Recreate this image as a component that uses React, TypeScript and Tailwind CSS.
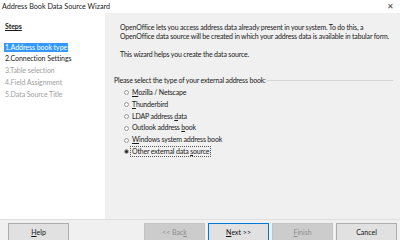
import React from "react";

const font = { fontFamily: 'Lato, "Noto Sans", sans-serif' };

function Radio({ checked, children, focus }: { checked?: boolean; children: React.ReactNode; focus?: boolean }) {
  return (
    <div className="flex items-center h-[11.8px] leading-[11.8px]">
      <span className="w-[5px] h-[5px] rounded-full border border-[#9a9a9a] bg-white flex items-center justify-center mr-[2px]">
        {checked && <span className="w-[3px] h-[3px] rounded-full bg-[#222]" />}
      </span>
      <span className={focus ? "outline outline-1 outline-dotted outline-[#555] px-[1px] leading-[9px]" : "px-[1px]"}>{children}</span>
    </div>
  );
}

function Btn({ children, variant }: { children: React.ReactNode; variant?: "default" | "primary" | "disabled" }) {
  const cls =
    variant === "primary"
      ? "border-[#0078d7] bg-[#e1e1e1] text-[#111]"
      : variant === "disabled"
      ? "border-[#c4c4c4] bg-[#cccccc] text-[#8c8c8c]"
      : "border-[#adadad] bg-[#e1e1e1] text-[#111]";
  return (
    <div className={`w-[61px] h-[20px] shrink-0 border flex items-start justify-center pt-[3px] leading-[10px] ${cls}`}>{children}</div>
  );
}

export default function App() {
  return (
    <div className="w-[400px] h-[240px] overflow-hidden bg-[#f0f0f0] flex flex-col text-[#1a1a1a] text-[7px] whitespace-nowrap" style={font}>
      <div className="h-[13px] shrink-0 bg-white flex items-center justify-between pl-[2px] pr-[6px] text-[7.2px] leading-[13px]">
        <span>Address Book Data Source Wizard</span>
        <span className="text-[8px] text-[#444]">✕</span>
      </div>
      <div className="flex h-[207px] shrink-0 border-b border-[#dfdfdf]">
        <div className="w-[105px] shrink-0 bg-white pl-[4px] pt-[8px] tracking-[-0.05px]">
          <div className="font-bold underline pl-[1px] h-[10px] leading-[10px]">Steps</div>
          <div className="mt-[10.5px] flex flex-col">
            <div className="h-[11.9px] flex items-center">
              <span className="bg-[#3399ff] text-white px-[1px] leading-[9px]">1.Address book type</span>
            </div>
            <div className="h-[11.9px] leading-[11.9px] pl-[1px]">2.Connection Settings</div>
            <div className="h-[11.9px] leading-[11.9px] pl-[1px] text-[#a0a0a0]">3.Table selection</div>
            <div className="h-[11.9px] leading-[11.9px] pl-[1px] text-[#a0a0a0]">4.Field Assignment</div>
            <div className="h-[11.9px] leading-[11.9px] pl-[1px] text-[#a0a0a0]">5.Data Source Title</div>
          </div>
        </div>
        <div className="flex-1 min-w-0 pt-[9.5px] tracking-[-0.18px]">
          <div className="pl-[15px] pr-[6px]">
            <div className="h-[9px] leading-[9px]">OpenOffice lets you access address data already present in your system. To do this, a</div>
            <div className="h-[9px] leading-[9px]">OpenOffice data source will be created in which your address data is available in tabular form.</div>
            <div className="h-[9px] leading-[9px] mt-[9px]">This wizard helps you create the data source.</div>
          </div>
          <div className="mt-[17px] h-[9px] leading-[9px] pl-[9px] pr-[7px] flex items-center">
            <span>Please select the type of your external address book:</span>
            <div className="flex-1 ml-[1px] h-[1px] bg-[#d5d5d5]" />
          </div>
          <div className="pl-[19px] mt-[2.6px] flex flex-col">
            <Radio><u>M</u>ozilla / Netscape</Radio>
            <Radio><u>T</u>hunderbird</Radio>
            <Radio>LDAP address <u>d</u>ata</Radio>
            <Radio>Outlook address <u>b</u>ook</Radio>
            <Radio><u>W</u>indows system address book</Radio>
            <Radio checked focus>Other external data <u>s</u>ource</Radio>
          </div>
        </div>
      </div>
      <div className="flex pt-[3px] pl-[8px] pr-[3px]">
        <Btn><u>H</u>elp</Btn>
        <div className="flex-1" />
        <div className="flex gap-[3px]">
          <Btn variant="disabled">&lt;&lt; Bac<u>k</u></Btn>
          <Btn variant="primary"><u>N</u>ext &gt;&gt;</Btn>
          <Btn variant="disabled"><u>F</u>inish</Btn>
          <Btn>Cancel</Btn>
        </div>
      </div>
    </div>
  );
}
